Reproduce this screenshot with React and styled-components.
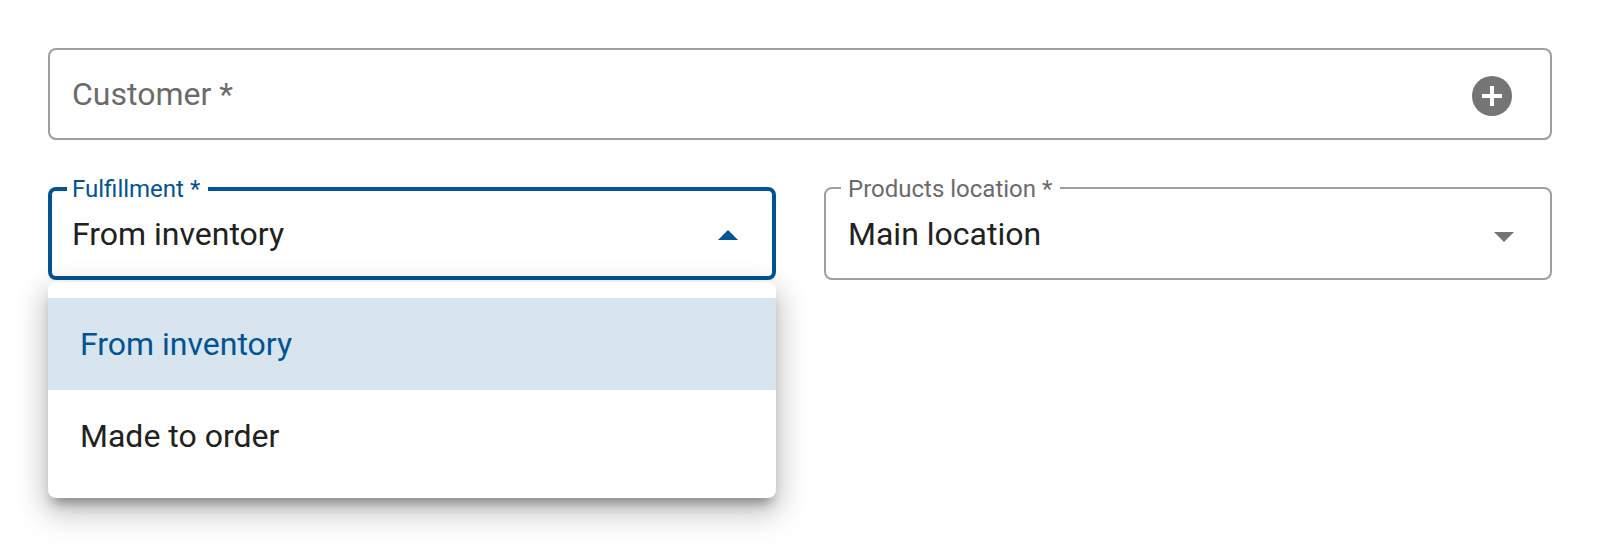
import React from 'react';
import styled, { createGlobalStyle } from 'styled-components';

const GlobalStyle = createGlobalStyle`
  html, body {
    margin: 0;
    padding: 0;
    background: #fff;
    font-family: Roboto, "Liberation Sans", sans-serif;
  }
`;

const Page = styled.div`
  box-sizing: border-box;
  width: 1600px;
  height: 548px;
  padding: 48px 48px 0;
  display: flex;
  flex-direction: column;
  gap: 47px;
  overflow: hidden;
`;

const Row = styled.div`
  display: flex;
  gap: 48px;
`;

const Column = styled.div`
  position: relative;
  flex: 1;
`;

const Field = styled.div`
  position: relative;
  box-sizing: border-box;
  height: ${props => (props.$tall ? '92px' : '93px')};
  display: flex;
  align-items: center;
  justify-content: space-between;
  padding: 0 ${props => props.$right || 36}px 0 ${props => (props.$focused ? 20 : 22)}px;
  border: ${props => (props.$focused ? '4px solid #005493' : '2px solid #9e9e9e')};
  border-radius: 8px;
`;

const FloatingLabel = styled.span`
  position: absolute;
  top: ${props => (props.$focused ? '-16px' : '-14px')};
  left: 15px;
  padding: 0 8px 0 ${props => (props.$focused ? '5px' : '7px')};
  background: #fff;
  font-size: 24px;
  line-height: 28px;
  color: ${props => (props.$focused ? '#005493' : '#6b6b6b')};
`;

const Placeholder = styled.span`
  font-size: 32px;
  color: #6b6b6b;
`;

const Value = styled.span`
  font-size: 32px;
  line-height: 38px;
  color: #212121;
`;

const Menu = styled.ul`
  position: absolute;
  top: 95px;
  left: 0;
  right: 0;
  margin: 0;
  padding: 16px 0;
  list-style: none;
  background: #fff;
  border-radius: 8px;
  box-shadow: 0 10px 12px -5px rgba(0, 0, 0, 0.34), 0 16px 32px 4px rgba(0, 0, 0, 0.13), 0 6px 28px 5px rgba(0, 0, 0, 0.11);
`;

const Option = styled.li`
  height: 92px;
  display: flex;
  align-items: center;
  padding-left: 32px;
  font-size: 32px;
  color: ${props => (props.$selected ? '#005493' : '#212121')};
  background: ${props => (props.$selected ? '#d8e4ee' : 'transparent')};
`;

const IconSvg = styled.svg`
  flex: none;
  margin-top: ${props => props.$shift}px;
`;

const PlusIcon = () => (
  <IconSvg $shift={4} width="40" height="40" viewBox="0 0 40 40">
    <circle cx="20" cy="20" r="20" fill="#757575" />
    <path d="M18 10h4v8h8v4h-8v8h-4v-8h-8v-4h8z" fill="#fff" />
  </IconSvg>
);

const Caret = ({ up, color }) => (
  <IconSvg $shift={up ? 3 : 7} width="20" height="10" viewBox="0 0 20 10">
    <path d={up ? 'M0 10L10 0l10 10z' : 'M0 0l10 10L20 0z'} fill={color} />
  </IconSvg>
);

export default function App() {
  return (
    <Page>
      <GlobalStyle />
      <Field $tall $right={38}>
        <Placeholder>Customer *</Placeholder>
        <PlusIcon />
      </Field>
      <Row>
        <Column>
          <Field $focused $right={34}>
            <FloatingLabel $focused>Fulfillment *</FloatingLabel>
            <Value>From inventory</Value>
            <Caret up color="#005493" />
          </Field>
          <Menu>
            <Option $selected>From inventory</Option>
            <Option>Made to order</Option>
          </Menu>
        </Column>
        <Column>
          <Field>
            <FloatingLabel>Products location *</FloatingLabel>
            <Value>Main location</Value>
            <Caret color="#757575" />
          </Field>
        </Column>
      </Row>
    </Page>
  );
}
